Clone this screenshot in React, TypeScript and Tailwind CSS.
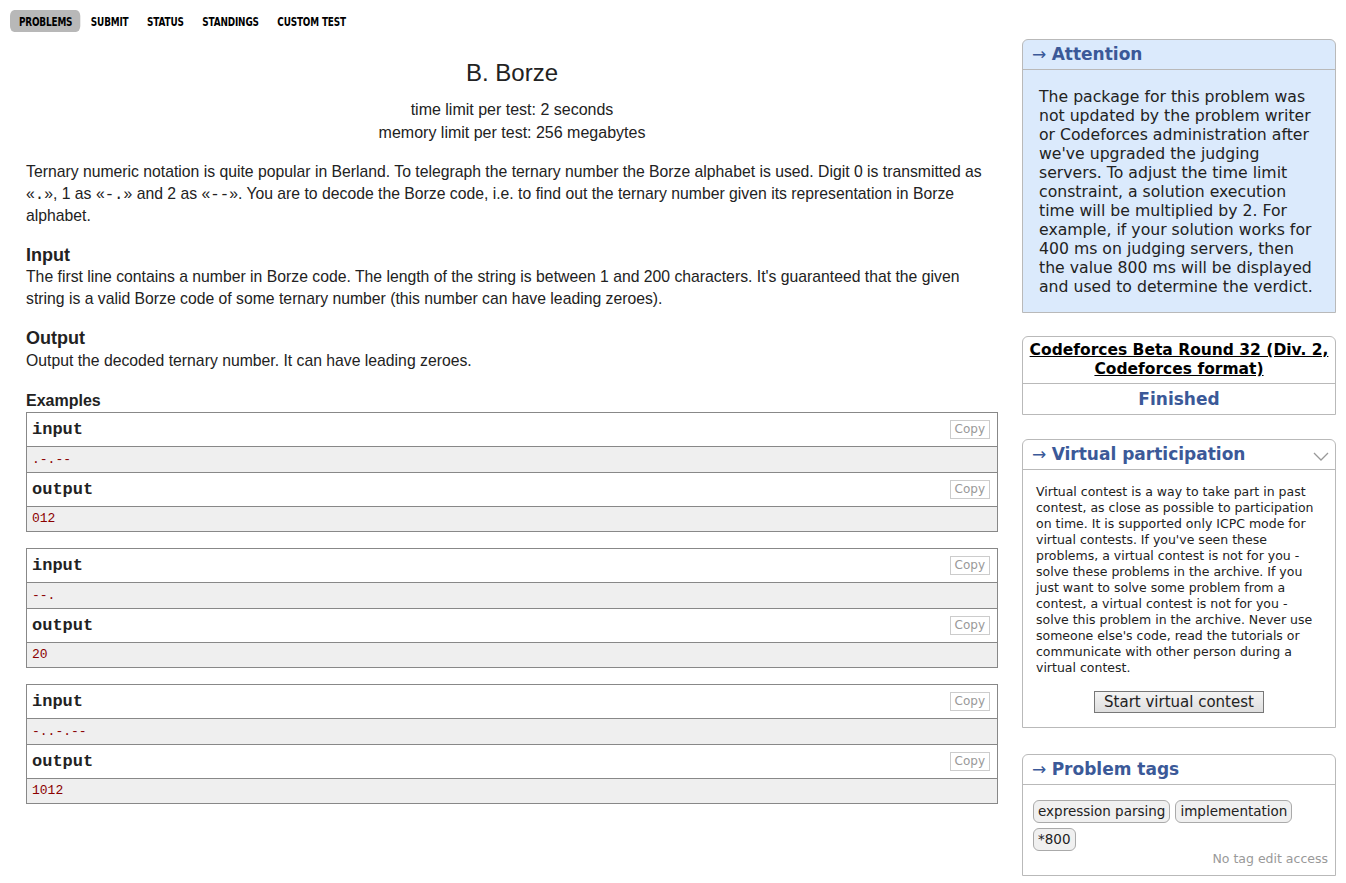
import React from "react";

const verdana = "font-['DejaVu_Sans',Verdana,sans-serif]";
const arial = "font-['Liberation_Sans',Arial,sans-serif]";
const mono = "font-['Liberation_Mono','DejaVu_Sans_Mono',monospace]";

function Sample({ input, output }: { input: string; output: string }) {
  const Head = ({ title }: { title: string }) => (
    <div className="flex items-center justify-between h-[34px] pl-[5px] pr-[7px] border-b border-[#888] bg-white">
      <span className={`${mono} font-bold text-[17px] text-[#222]`}>{title}</span>
      <span className={`${verdana} text-[12px] text-[#999] border border-[#ccc] px-[4px] leading-[17px]`}>Copy</span>
    </div>
  );
  return (
    <div className="border border-[#888]">
      <Head title="input" />
      <div className={`${mono} text-[13px] text-[#8b0000] bg-[#efefef] h-[26px] pl-[5px] leading-[25px] border-b border-[#888]`}>{input}</div>
      <Head title="output" />
      <div className={`${mono} text-[13px] text-[#8b0000] bg-[#efefef] h-[24px] pl-[5px] leading-[24px]`}>{output}</div>
    </div>
  );
}

function BoxHeader({ title, chevron }: { title: string; chevron?: boolean }) {
  return (
    <div className="flex items-center justify-between h-[30px] pl-[9px] pr-[6px] border-b border-[#b9b9b9]">
      <span className={`${verdana} text-[17px] text-[#3b5998]`}>
        <span className="font-normal">→</span> <span className="font-bold">{title}</span>
      </span>
      {chevron && (
        <svg width="16" height="10" viewBox="0 0 16 10" className="mt-[4px]">
          <path d="M1 1 L8 8 L15 1" fill="none" stroke="#999" strokeWidth="1.3" />
        </svg>
      )}
    </div>
  );
}

export default function App() {
  return (
    <div className={`${arial} bg-white w-[1346px] min-h-[883px] text-[#222]`}>
      <div className="pl-[10px] pt-[10px]">
        <div className="flex items-center origin-left scale-x-[0.74] font-['DejaVu_Sans',sans-serif] font-bold text-[12px] text-black tracking-[-0.2px]">
          <span className="bg-[#b8b8b8] rounded-[6px] pl-[12px] pr-[11px] h-[22px] pt-[2px] flex items-center">PROBLEMS</span>
          <span className="ml-[14px] pt-[2px]">SUBMIT</span>
          <span className="ml-[25px] pt-[2px]">STATUS</span>
          <span className="ml-[25px] pt-[2px]">STANDINGS</span>
          <span className="ml-[25px] pt-[2px]">CUSTOM TEST</span>
        </div>
      </div>
      <div className="flex pl-[26px] pr-[10px] gap-[24px]">
        <div className="w-[972px]">
          <div className="text-center">
            <div className="text-[24px] leading-[28px] mt-[27px]">B. Borze</div>
            <div className="text-[16px] leading-[23px] mt-[11px]">time limit per test: 2 seconds</div>
            <div className="text-[16px] leading-[23px]">memory limit per test: 256 megabytes</div>
          </div>
          <p className="text-[15.75px] leading-[22px] mt-[17px]">
            Ternary numeric notation is quite popular in Berland. To telegraph the ternary number the Borze alphabet is used. Digit 0 is transmitted as{" "}
            «<span className={`${mono} leading-[10px]`}>.</span>», 1 as «<span className={`${mono} leading-[10px]`}>-.</span>» and 2 as «<span className={`${mono} leading-[10px]`}>--</span>». You are to decode the Borze code, i.e. to find out the ternary number given its representation in Borze alphabet.
          </p>
          <div className="text-[18px] font-bold leading-[22px] mt-[17px]">Input</div>
          <p className="text-[15.75px] leading-[22px]">
            The first line contains a number in Borze code. The length of the string is between 1 and 200 characters. It's guaranteed that the given string is a valid Borze code of some ternary number (this number can have leading zeroes).
          </p>
          <div className="text-[18px] font-bold leading-[22px] mt-[17px]">Output</div>
          <p className="text-[15.75px] leading-[22px] mt-[1px]">Output the decoded ternary number. It can have leading zeroes.</p>
          <div className="text-[16px] font-bold leading-[20px] mt-[19px]">Examples</div>
          <div className="flex flex-col gap-[16px] mt-[1px]">
            <Sample input=".-.--" output="012" />
            <Sample input="--." output="20" />
            <Sample input="-..-.--" output="1012" />
          </div>
        </div>
        <div className={`${verdana} w-[314px] mt-[7px] flex flex-col`}>
          <div className="border border-[#b9b9b9] rounded-t-[6px] bg-[#dbeafc]">
            <BoxHeader title="Attention" />
            <div className="text-[15.7px] leading-[19px] text-[#222] pl-[16px] pr-[17px] pt-[17px] pb-[16px]">
              The package for this problem was not updated by the problem writer or Codeforces administration after we've upgraded the judging servers. To adjust the time limit constraint, a solution execution time will be multiplied by 2. For example, if your solution works for 400 ms on judging servers, then the value 800 ms will be displayed and used to determine the verdict.
            </div>
          </div>
          <div className="border border-[#b9b9b9] rounded-t-[6px] mt-[23px]">
            <div className="text-center font-bold text-[15.5px] leading-[19px] py-[4px] underline text-black border-b border-[#b9b9b9]">
              Codeforces Beta Round 32 (Div. 2, Codeforces format)
            </div>
            <div className="text-center font-bold text-[17px] text-[#3b5998] h-[30px] leading-[30px]">Finished</div>
          </div>
          <div className="border border-[#b9b9b9] rounded-t-[6px] mt-[24px]">
            <BoxHeader title="Virtual participation" chevron />
            <div className="text-[12.5px] leading-[16px] pl-[13px] pr-[16px] pt-[14px]">
              Virtual contest is a way to take part in past contest, as close as possible to participation on time. It is supported only ICPC mode for virtual contests. If you've seen these problems, a virtual contest is not for you - solve these problems in the archive. If you just want to solve some problem from a contest, a virtual contest is not for you - solve this problem in the archive. Never use someone else's code, read the tutorials or communicate with other person during a virtual contest.
            </div>
            <div className="flex justify-center mt-[15px] mb-[14px]">
              <button className="border border-[#777] bg-gradient-to-b from-[#f4f4f4] to-[#dedede] text-[15px] leading-[20px] px-[9px] text-[#222]">
                Start virtual contest
              </button>
            </div>
          </div>
          <div className="border border-[#b9b9b9] rounded-t-[6px] mt-[26px]">
            <BoxHeader title="Problem tags" />
            <div className="pl-[10px] pr-[7px] pt-[15px] pb-[6px]">
              <div className="flex flex-wrap gap-x-[5px] gap-y-[5px] text-[13.5px]">
                <span className="bg-[#f0f0f0] border border-[#aaa] rounded-[6px] px-[4px] leading-[21px]">expression parsing</span>
                <span className="bg-[#f0f0f0] border border-[#aaa] rounded-[6px] px-[4px] leading-[21px]">implementation</span>
                <span className="bg-[#f0f0f0] border border-[#aaa] rounded-[6px] px-[4px] leading-[21px]">*800</span>
              </div>
              <div className="text-right text-[12.5px] text-[#999] mt-[-1px]">No tag edit access</div>
            </div>
          </div>
        </div>
      </div>
    </div>
  );
}
